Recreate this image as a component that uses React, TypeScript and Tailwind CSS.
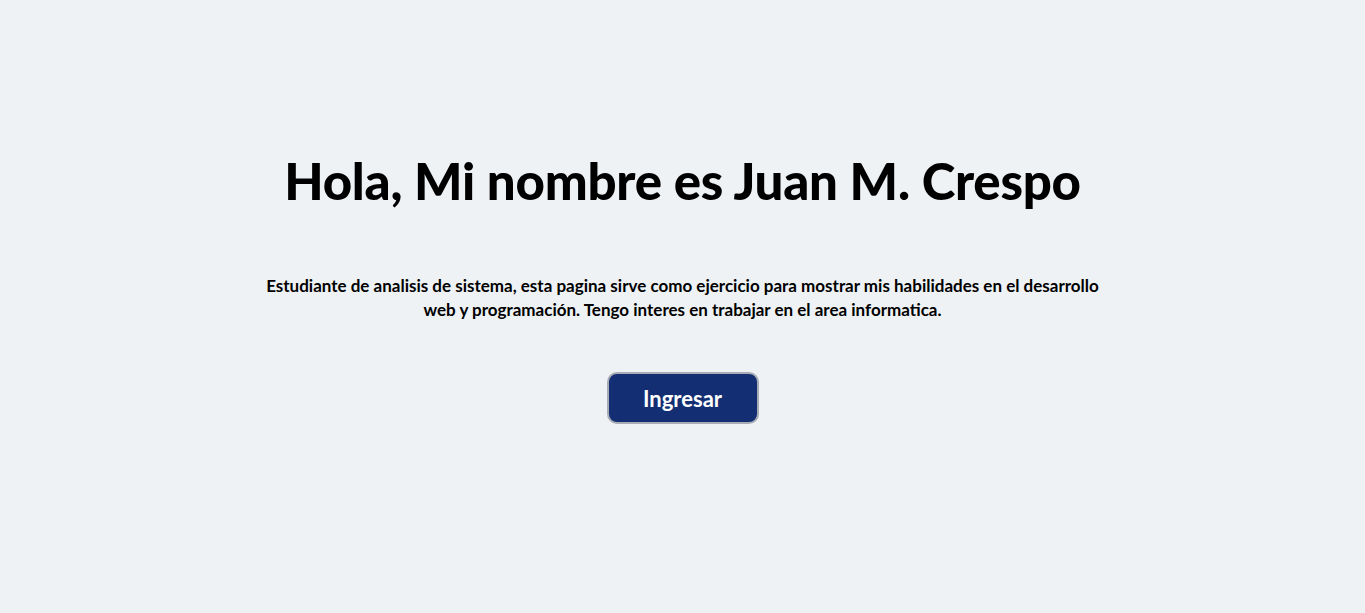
export default function App() {
  return (
    <div
      className="min-h-screen w-full bg-[#eef2f5] flex flex-col items-center"
      style={{ fontFamily: 'Lato, "Noto Sans", sans-serif' }}
    >
      <h1 className="mt-[150px] text-[51px] leading-[62px] font-black text-black tracking-[-0.25px]">
        Hola, Mi nombre es Juan M. Crespo
      </h1>
      <p className="mt-[62px] w-[850px] text-center text-[17px] leading-[24px] font-bold text-black">
        Estudiante de analisis de sistema, esta pagina sirve como ejercicio para mostrar mis habilidades en el desarrollo web y programación. Tengo interes en trabajar en el area informatica.
      </p>
      <button className="mt-[50px] w-[152px] h-[52px] rounded-[10px] bg-[#132e73] border-2 border-[#a8adb5] text-white text-[22px] font-bold">
        Ingresar
      </button>
    </div>
  );
}
